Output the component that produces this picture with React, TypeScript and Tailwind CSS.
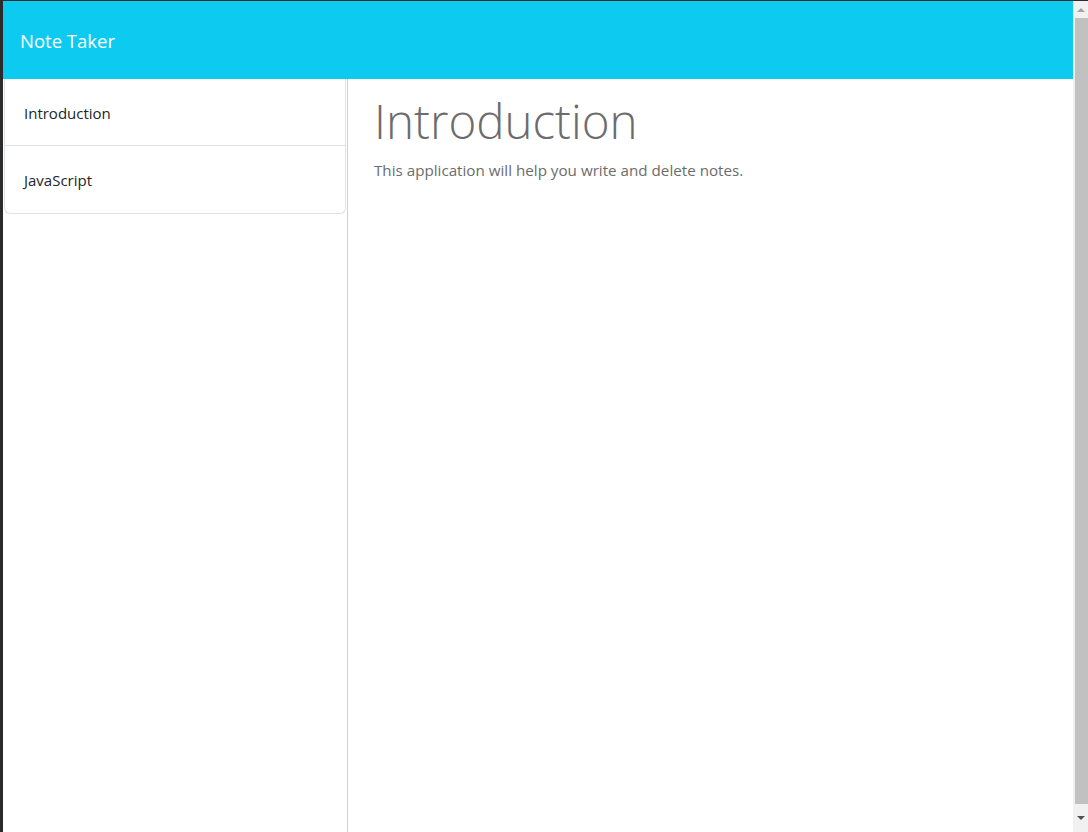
import React from "react";

export default function App() {
  const font = { fontFamily: '"Open Sans", "Noto Sans", sans-serif' } as React.CSSProperties;
  return (
    <div className="flex h-[832px] w-[1088px] overflow-hidden bg-[#2b2b2b] pt-px" style={font}>
      <div className="ml-[3px] flex flex-1 flex-col bg-white">
        <header className="flex h-[78px] items-center bg-[#0dcaf0] pt-px pl-[17px] text-[18.5px] text-white">
          Note Taker
        </header>
        <div className="flex flex-1">
          <aside className="w-[345px] border-r border-[#d0d0d0]">
            <ul className="ml-px mr-px rounded-b-[6px] border border-t-0 border-[#dee2e6]">
              <li className="flex h-[67px] items-center border-b border-[#dee2e6] pl-[19px] pt-[2px] text-[15px] text-[#212529]">
                Introduction
              </li>
              <li className="flex h-[67px] items-center pl-[19px] pt-px text-[15px] text-[#212529]">
                JavaScript
              </li>
            </ul>
          </aside>
          <main className="flex-1 pl-[26px] pt-[13px] text-[#6c6c6c]">
            <h1 className="text-[47.5px] font-light leading-[1.2]">Introduction</h1>
            <p className="mt-[10px] text-[15.2px]">This application will help you write and delete notes.</p>
          </main>
        </div>
      </div>
      <div className="flex w-[15px] flex-col bg-[#f1f1f1]">
        <div className="flex h-[17px] items-center justify-center">
          <div className="h-0 w-0 border-x-[4px] border-b-[4px] border-x-transparent border-b-[#a3a3a3]" />
        </div>
        <div className="ml-[2px] flex-1 bg-[#c1c1c1]" />
        <div className="flex h-[28px] items-center justify-center">
          <div className="h-0 w-0 border-x-[4px] border-t-[4px] border-x-transparent border-t-[#505050]" />
        </div>
      </div>
    </div>
  );
}
